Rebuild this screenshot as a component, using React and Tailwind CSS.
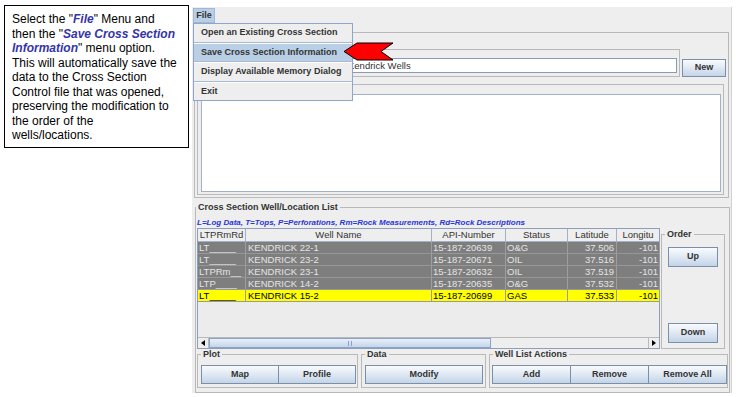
import React from "react";

const headers = ["LTPRmRd", "Well Name", "API-Number", "Status", "Latitude", "Longitu"];

const rows = [
  ["LT_____", "KENDRICK 22-1", "15-187-20639", "O&G", "37.506", "-101"],
  ["LT_____", "KENDRICK 23-2", "15-187-20671", "OIL", "37.516", "-101"],
  ["LTPRm__", "KENDRICK 23-1", "15-187-20632", "OIL", "37.519", "-101"],
  ["LTP____", "KENDRICK 14-2", "15-187-20635", "O&G", "37.532", "-101"],
  ["LT_____", "KENDRICK 15-2", "15-187-20699", "GAS", "37.533", "-101"],
];

const cellAlign = [
  "pl-[1px]",
  "pl-[2px]",
  "pl-[1px]",
  "pl-[1px]",
  "text-right pr-[2px]",
  "text-right pr-[1px]",
];

const cols = "grid grid-cols-[48px_186px_74px_62px_49px_42px]";

function Legend({ children, className = "ml-[3px]" }) {
  return (
    <legend className={`px-[2px] text-[9px] leading-[11px] font-bold text-[#333333] ${className}`}>
      {children}
    </legend>
  );
}

function Btn({ children, className = "" }) {
  return (
    <div
      className={`flex items-center justify-center border border-[#7b8fa8] bg-linear-to-b from-[#f8fbff] via-[#dfe8f3] to-[#c3d4e8] text-[9px] font-bold text-[#333333] ${className}`}
    >
      {children}
    </div>
  );
}

function MenuItem({ children, active }) {
  return (
    <div className={`h-[17.5px] flex items-center pl-[7px] ${active ? "bg-[#b8cfe5]" : ""}`}>
      {children}
    </div>
  );
}

function MenuSep() {
  return <div className="h-[2px] border-t border-[#a9b9d3] border-b border-b-white" />;
}

export default function App() {
  return (
    <div className="w-[736px] h-[397px] bg-white flex items-start overflow-hidden font-['Liberation_Sans',Arial,sans-serif] text-[#333333]">
      {/* help note */}
      <div className="ml-[4px] mt-[5px] w-[185px] h-[143px] shrink-0 border border-black bg-white pl-[7px] pt-[6px] text-[12px] leading-[14.5px] text-black">
        Select the "<b className="italic text-[#3434a8]">File</b>" Menu and
        <br />
        then the "<b className="italic text-[#3434a8]">Save Cross Section</b>
        <br />
        <b className="italic text-[#3434a8]">Information</b>" menu option.
        <br />
        This will automatically save the
        <br />
        data to the Cross Section
        <br />
        Control file that was opened,
        <br />
        preserving the modification to
        <br />
        the order of the
        <br />
        wells/locations.
      </div>

      {/* application window */}
      <div className="relative ml-[3px] mt-[7px] w-[540px] h-[386px] shrink-0 bg-[#eeeeee] border-r border-[#d2d2d2] flex flex-col">
        {/* menu bar */}
        <div className="h-[16px] flex">
          <div className="mt-[1px] ml-[1px] w-[22px] h-[15px] bg-[#b8cfe5] border border-[#a2b7d6] flex items-center justify-center text-[9px] font-bold">
            File
          </div>
        </div>

        {/* cross section panel */}
        <div className="ml-[2px] mt-[9px] w-[535px] h-[166px] border border-[#b9b9b9] px-[2px] flex flex-col">
          <div className="mt-[16px] flex items-start">
            <div className="w-[483px] h-[28px] border border-[#b9b9b9] px-[2px]">
              <div className="mt-[8px] w-[477px] h-[15px] bg-white border border-[#8a9bb6] pl-[147px] text-[9.5px] leading-[13px] text-[#333333] whitespace-nowrap overflow-hidden">
                Kendrick Wells
              </div>
            </div>
            <Btn className="ml-[2px] mt-[10px] w-[45px] h-[18px]">New</Btn>
          </div>
          <div className="mt-[7px] w-[527px] h-[111px] border border-[#b9b9b9] px-[3px] pt-[9px]">
            <div className="w-[520px] h-[98px] bg-white border border-[#a3b1c8]" />
          </div>
        </div>

        {/* well list */}
        <fieldset className="ml-[3px] mt-[4px] w-[535px] border border-[#b9b9b9] pb-[4px]">
          <Legend className="ml-0">Cross Section Well/Location List</Legend>
          <div className="mt-[4px] h-[11px] pl-[1px] text-[8px] leading-[11px] font-bold italic text-[#2a35d6] whitespace-nowrap">
            L=Log Data, T=Tops, P=Perforations, Rm=Rock Measurements, Rd=Rock Descriptions
          </div>

          <div className="flex items-start pl-[1px]">
            {/* table */}
            <div className="w-[463px] h-[121px] border border-[#8e9fb9] bg-[#ececec] flex flex-col">
              <div className={`${cols} h-[13px] border-b border-[#a3b1c6] bg-[#eeeeee] text-[9.5px] leading-[12px] text-[#333333]`}>
                {headers.map((h, i) => (
                  <div
                    key={h}
                    className={`text-center whitespace-nowrap overflow-hidden ${i < 5 ? "border-r border-[#a3b1c6]" : ""}`}
                  >
                    {h}
                  </div>
                ))}
              </div>
              {rows.map((r, ri) => {
                const current = ri === rows.length - 1;
                return (
                  <div
                    key={ri}
                    className={`${cols} h-[12px] border-b text-[9.5px] leading-[11px] ${
                      current
                        ? "bg-[#ffff00] text-black border-[#9a9a9a]"
                        : "bg-[#7e7e7e] text-[#e4e4e4] border-[#979797]"
                    }`}
                  >
                    {r.map((c, ci) => (
                      <div
                        key={ci}
                        className={`whitespace-nowrap overflow-hidden ${cellAlign[ci]} ${
                          ci < 5 ? "border-r border-[#9e9e9e]" : ""
                        }`}
                      >
                        {c}
                      </div>
                    ))}
                  </div>
                );
              })}
              <div className="flex-1" />
              {/* horizontal scrollbar */}
              <div className="h-[11px] flex border-t border-[#b9b9b9] bg-[#eeeeee]">
                <div className="w-[11px] flex items-center justify-center border-r border-[#b9b9b9]">
                  <svg width="4" height="6" viewBox="0 0 4 6">
                    <path d="M4 0 L0 3 L4 6 Z" fill="#000" />
                  </svg>
                </div>
                <div className="w-[282px] border border-[#8da2c9] bg-linear-to-b from-[#eaf0f8] to-[#c4d6ea] flex items-center justify-center gap-[2px]">
                  <span className="w-px h-[5px] bg-[#8da2c9]" />
                  <span className="w-px h-[5px] bg-[#8da2c9]" />
                </div>
                <div className="flex-1" />
                <div className="w-[11px] flex items-center justify-center border-l border-[#b9b9b9]">
                  <svg width="4" height="6" viewBox="0 0 4 6">
                    <path d="M0 0 L4 3 L0 6 Z" fill="#000" />
                  </svg>
                </div>
              </div>
            </div>

            {/* order */}
            <fieldset className="ml-[1px] mt-[1px] w-[63px] h-[120px] border border-[#b9b9b9]">
              <Legend>Order</Legend>
              <div className="h-[108px] px-[6px] pt-[7px] pb-[5px] flex flex-col justify-between">
                <Btn className="w-[50px] h-[20px]">Up</Btn>
                <Btn className="w-[50px] h-[20px]">Down</Btn>
              </div>
            </fieldset>
          </div>

          {/* action groups */}
          <div className="flex items-start pl-[1px]">
            <fieldset className="w-[161px] border border-[#b9b9b9]">
              <Legend>Plot</Legend>
              <div className="flex pl-[3px] pt-[5px] pb-[3px]">
                <Btn className="w-[78px] h-[19px]">Map</Btn>
                <Btn className="-ml-px w-[78px] h-[19px]">Profile</Btn>
              </div>
            </fieldset>
            <fieldset className="ml-[3px] w-[125px] border border-[#b9b9b9]">
              <Legend>Data</Legend>
              <div className="flex pl-[3px] pt-[5px] pb-[3px]">
                <Btn className="w-[118px] h-[19px]">Modify</Btn>
              </div>
            </fieldset>
            <fieldset className="ml-[3px] w-[239px] border border-[#b9b9b9]">
              <Legend>Well List Actions</Legend>
              <div className="flex pl-[2px] pt-[5px] pb-[3px]">
                <Btn className="w-[79px] h-[19px]">Add</Btn>
                <Btn className="-ml-px w-[79px] h-[19px]">Remove</Btn>
                <Btn className="-ml-px w-[79px] h-[19px]">Remove All</Btn>
              </div>
            </fieldset>
          </div>
        </fieldset>

        {/* open File menu */}
        <div className="absolute left-[1px] top-[16px] w-[160px] border border-[#8fa5cb] bg-[#eeeeee] flex flex-col text-[9px] font-bold text-[#333333] whitespace-nowrap">
          <MenuItem>Open an Existing Cross Section</MenuItem>
          <MenuSep />
          <MenuItem active>Save Cross Section Information</MenuItem>
          <MenuSep />
          <MenuItem>Display Available Memory Dialog</MenuItem>
          <MenuSep />
          <MenuItem>Exit</MenuItem>
        </div>

        {/* pointer arrow */}
        <svg className="absolute left-[151px] top-[35px]" width="52" height="19" viewBox="0 0 52 19">
          <path
            d="M1 9.5 L14 1 L50 1 L38 9.5 L50 18 L14 18 Z"
            fill="#ff0000"
            stroke="#000"
            strokeWidth="1"
            strokeLinejoin="miter"
          />
        </svg>
      </div>
    </div>
  );
}
